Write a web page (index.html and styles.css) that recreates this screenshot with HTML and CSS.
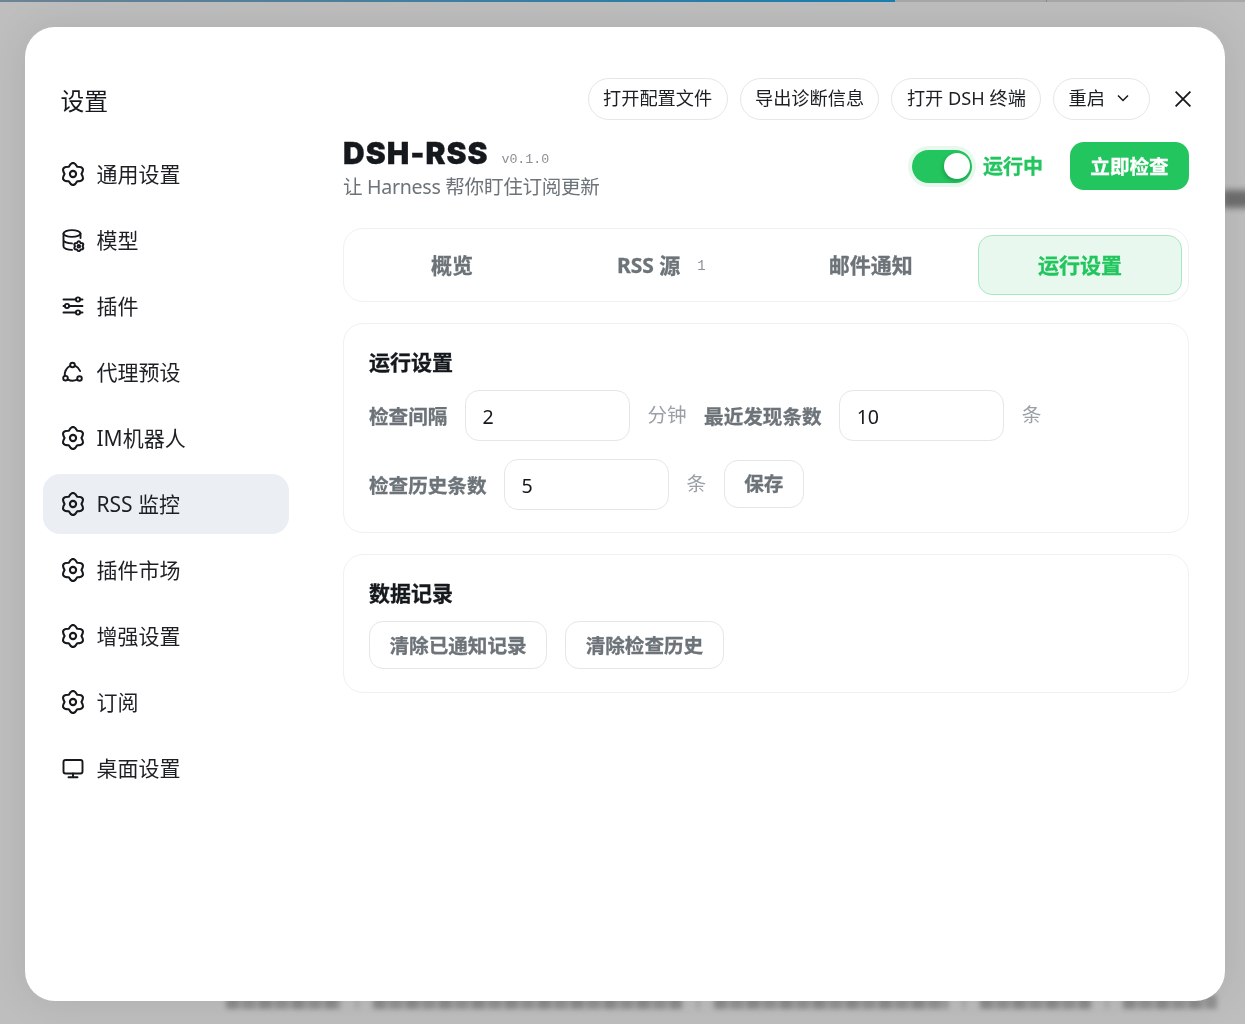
FILE: index.html
```html
<!DOCTYPE html>
<html lang="zh-CN">
<head>
<meta charset="utf-8">
<title>设置</title>
<link rel="stylesheet" href="styles.css">
</head>
<body>
<div class="backdrop">
  <div class="progress"><div class="progress-fill"></div><div class="progress-tick"></div></div>
  <div class="blur-blob"></div>
  <div class="blur-row">
    <i class="smear s1"></i><i class="sep"></i><i class="smear s2"></i><i class="sep"></i><i class="smear s3"></i><i class="sep"></i><i class="smear s4"></i><i class="sep"></i><i class="smear s5"></i>
  </div>
</div>
<svg class="defs" width="0" height="0" aria-hidden="true">
  <symbol id="gear" viewBox="1.200 1.200 21.600 21.600">
    <path d="M8.200 5.420Q12-1.400 15.800 5.420 23.600 5.300 19.600 12 23.600 18.700 15.800 18.580 12 25.400 8.200 18.580 .4 18.700 4.400 12 .4 5.300 8.200 5.420Z"/>
    <circle cx="12" cy="12" r="2.800"/>
  </symbol>
</svg>
<main class="modal">
  <aside class="sidebar">
    <h1 class="side-title">设置</h1>
    <nav class="nav">
      <a class="nav-item"><svg class="ico"><use href="#gear"/></svg><span>通用设置</span></a>
      <a class="nav-item"><svg class="ico" viewBox="0 0 24 24"><ellipse cx="11" cy="5.500" rx="8.500" ry="3.400"/><path d="M2.500 5.500v13c0 1.800 3.800 3.400 8.500 3.400M2.500 12c0 1.800 3.800 3.400 8.500 3.400M19.500 5.500v4.500"/><g class="ico-mini" transform="translate(11.800 12.200) scale(.5)"><path d="M8.200 5.420Q12-1.400 15.800 5.420 23.600 5.300 19.600 12 23.600 18.700 15.800 18.580 12 25.400 8.200 18.580 .4 18.700 4.400 12 .4 5.300 8.200 5.420Z"/><circle cx="12" cy="12" r="2.500"/></g></svg><span>模型</span></a>
      <a class="nav-item"><svg class="ico" viewBox="0 0 24 24"><path d="M2.500 5.500h12.300M19.200 5.500h2.300M2.500 12h1.300M8.200 12h13.300M2.500 18.500h12.300M19.200 18.500h2.300"/><circle cx="17" cy="5.500" r="2.100"/><circle cx="6" cy="12" r="2.100"/><circle cx="17" cy="18.500" r="2.100"/></svg><span>插件</span></a>
      <a class="nav-item"><svg class="ico" viewBox="0 0 24 24"><circle cx="11.500" cy="5" r="2.300"/><circle cx="4.500" cy="18.200" r="2.300"/><circle cx="18.500" cy="18.500" r="2.300"/><path d="M9.200 5.800C5.800 7.800 3.400 11.300 3.800 15.900M6.800 19.400c2.800 1.700 6.200 1.700 9.400.3M13.900 5.600c2.400 1.100 4.200 2.900 5.200 5.400"/></svg><span>代理预设</span></a>
      <a class="nav-item"><svg class="ico"><use href="#gear"/></svg><span>IM机器人</span></a>
      <a class="nav-item active"><svg class="ico"><use href="#gear"/></svg><span>RSS 监控</span></a>
      <a class="nav-item"><svg class="ico"><use href="#gear"/></svg><span>插件市场</span></a>
      <a class="nav-item"><svg class="ico"><use href="#gear"/></svg><span>增强设置</span></a>
      <a class="nav-item"><svg class="ico"><use href="#gear"/></svg><span>订阅</span></a>
      <a class="nav-item"><svg class="ico" viewBox="0 0 24 24"><rect x="2.500" y="4" width="19" height="13.500" rx="2"/><path d="M12 17.500v3.500M7.500 21.200h9"/></svg><span>桌面设置</span></a>
    </nav>
  </aside>
  <section class="content">
    <div class="toolbar">
      <button class="pill">打开配置文件</button>
      <button class="pill">导出诊断信息</button>
      <button class="pill">打开 DSH 终端</button>
      <button class="pill pill-menu">重启<svg class="chevron" viewBox="0 0 12 8"><path d="M1 1.500l5 5 5-5"/></svg></button>
      <button class="close" aria-label="关闭"><svg viewBox="0 0 16 16"><path d="M.6.600l14.800 14.800M15.400.600L.6 15.400"/></svg></button>
    </div>
    <header class="head">
      <div class="head-left">
        <div class="title-row"><h2 class="title">DSH-RSS</h2><span class="version">v0.1.0</span></div>
        <p class="subtitle">让 Harness 帮你盯住订阅更新</p>
      </div>
      <div class="head-right">
        <span class="switch"><span class="knob"></span></span>
        <span class="status">运行中</span>
        <button class="primary">立即检查</button>
      </div>
    </header>
    <div class="tabs">
      <button class="tab">概览</button>
      <button class="tab">RSS 源<span class="count">1</span></button>
      <button class="tab">邮件通知</button>
      <button class="tab tab-active">运行设置</button>
    </div>
    <section class="card card-form">
      <h3 class="card-title">运行设置</h3>
      <div class="form">
        <label class="label">检查间隔</label>
        <input class="input" value="2">
        <span class="unit">分钟</span>
        <label class="label">最近发现条数</label>
        <input class="input" value="10">
        <span class="unit">条</span>
        <label class="label">检查历史条数</label>
        <input class="input" value="5">
        <span class="unit">条</span>
        <button class="ghost save">保存</button>
      </div>
    </section>
    <section class="card">
      <h3 class="card-title">数据记录</h3>
      <div class="actions">
        <button class="ghost">清除已通知记录</button>
        <button class="ghost">清除检查历史</button>
      </div>
    </section>
  </section>
</main>
</body>
</html>
```
FILE: styles.css
```css
*{box-sizing:border-box}
html,body{height:100%}
body{margin:0;background:#bebebe;font-family:"Noto Sans","Noto Sans CJK SC",sans-serif;color:#15181c;overflow:hidden}
button,input{font:inherit}
.defs{position:absolute}
.backdrop{position:fixed;inset:0;overflow:hidden}
.progress{position:absolute;left:0;top:0;width:100%;height:2px;background:#a8a8a8}
.progress-fill{width:895px;height:2px;background:linear-gradient(90deg,#6d8494,#2f7ea8 70%,#1b7fb0)}
.progress-tick{position:absolute;left:1046px;top:0;width:1px;height:2px;background:#8c8c8c}
.blur-blob{position:absolute;left:1222px;top:190px;width:30px;height:18px;background:#6e6e6e;filter:blur(3px)}
.blur-row{position:absolute;left:226px;top:995px;display:flex;gap:7px;height:14px;filter:blur(2.500px)}
.smear{display:block;height:14px;background:repeating-linear-gradient(90deg,#8c8c8c 0 12px,#a2a2a2 12px 17px,#929292 17px 29px,#a8a8a8 29px 33px)}
.sep{display:block;width:2px;height:14px;margin:0 8px;background:#969696}
.s1{width:115px}
.s2{width:309px}
.s3{width:234px}
.s4{width:111px}
.s5{width:94px}
.modal{position:fixed;left:25px;top:27px;width:1200px;height:974px;background:#fff;border-radius:30px;display:flex;box-shadow:0 0 42px rgba(0,0,0,.09)}
.sidebar{width:264px;flex:none;padding:57px 0 0 18px}
.side-title{margin:0 0 26px 17.500px;font-size:23.800px;font-weight:400;line-height:34px}
.nav{display:flex;flex-direction:column;gap:6px}
.nav-item{display:flex;align-items:center;gap:11.500px;height:60px;padding-left:18px;border-radius:17px;font-size:21px;color:#1c1f23}
.nav-item span{margin-top:-2px}
.nav-item.active{background:#ebeef3}
.ico{width:24px;height:24px;flex:none;fill:none;stroke:#15181c;stroke-width:1.900;stroke-linecap:round;stroke-linejoin:round}
.ico-mini{stroke-width:4}
.content{flex:1;min-width:0;padding:51px 36px 0 54px}
.toolbar{display:flex;justify-content:flex-end;align-items:center;gap:12px;margin-right:-6px}
.pill{height:42px;padding:0 14.400px 4px;border:1px solid #e4e6e8;border-radius:21px;background:#fff;font-size:18.200px;color:#1c1f23;white-space:nowrap}
.pill-menu{display:flex;align-items:center;gap:12px;padding-right:20px}
.chevron{width:12px;height:8px;margin-top:2px;fill:none;stroke:#15181c;stroke-width:1.500}
.close{width:24px;height:24px;margin-left:9px;padding:4px;border:0;background:none}
.close svg{display:block;width:16px;height:16px;fill:none;stroke:#15181c;stroke-width:1.800}
.head{display:flex;justify-content:space-between;align-items:flex-start;margin:14px 0 27px}
.title-row{display:flex;align-items:baseline;gap:13px;height:36px}
.title{margin:0;position:relative;top:.5px;font-family:Inter,"Noto Sans",sans-serif;font-size:30px;font-weight:900;letter-spacing:1px;line-height:36px;color:#15181c;-webkit-text-stroke:.3px currentColor}
.version{font-family:"Liberation Mono",monospace;font-size:13.300px;color:#8a9096}
.subtitle{margin:3px 0 0;font-size:19.600px;letter-spacing:-.3px;line-height:28px;color:#6c7379}
.head-right{display:flex;align-items:center;margin-top:8px}
.switch{position:relative;display:block;width:60px;height:33px;margin-right:11px;margin-left:-1px;border-radius:17px;background:#22c55e;box-shadow:0 0 0 4px #e8f8ee}
.knob{position:absolute;right:2px;top:3.500px;width:26px;height:26px;border-radius:50%;background:#fff;box-shadow:-1px 2px 4px rgba(0,0,0,.2)}
.status{font-size:20px;font-weight:700;color:#22c55e;margin:-2px 27px 0 0;-webkit-text-stroke:.3px currentColor}
.primary{width:119px;height:48px;padding:0 0 2px;border:0;border-radius:14px;background:#22c55e;color:#fff;font-size:19.600px;font-weight:700;-webkit-text-stroke:.3px currentColor}
.tabs{display:grid;grid-template-columns:repeat(4,1fr);gap:5.500px;height:74px;padding:6px;border:1px solid #f0f1f3;border-radius:20px}
.tab{height:60px;padding:0 0 2px;border:1px solid transparent;border-radius:14px;background:none;font-size:21px;font-weight:700;color:#6c7379;-webkit-text-stroke:.3px currentColor}
.tab-active{background:#e8f8ee;border-color:#a6e8bf;color:#22c55e}
.count{margin-left:17px;position:relative;top:-3px;font-family:"Liberation Mono",monospace;font-size:14px;font-weight:400;color:#8a9096;-webkit-text-stroke:0}
.card{margin-top:21px;padding:25px 25px 23px;border:1px solid #f0f1f3;border-radius:20px}
.card-form{padding-bottom:22px}
.card-title{margin:0 0 15px;font-size:21px;font-weight:700;line-height:26px;color:#15181c;-webkit-text-stroke:.3px currentColor}
.form{display:flex;flex-wrap:wrap;align-items:center;gap:18px 17.500px}
.label{font-size:19.600px;font-weight:700;color:#6c7379;-webkit-text-stroke:.3px currentColor}
.input{width:165px;height:51px;padding:2px 16.500px 0;border:1px solid #e4e6e8;border-radius:14px;background:#fff;font-size:19.600px;color:#15181c;outline:0}
.unit{font-size:19.600px;color:#9aa0a6;position:relative;top:-2px}
.actions{display:flex;gap:18px}
.ghost{height:48px;padding:0 19.500px 2px;border:1px solid #e4e6e8;border-radius:14px;background:#fff;font-size:19.600px;font-weight:700;color:#6c7379;white-space:nowrap;-webkit-text-stroke:.3px currentColor}
.save{margin-bottom:2px}
```
